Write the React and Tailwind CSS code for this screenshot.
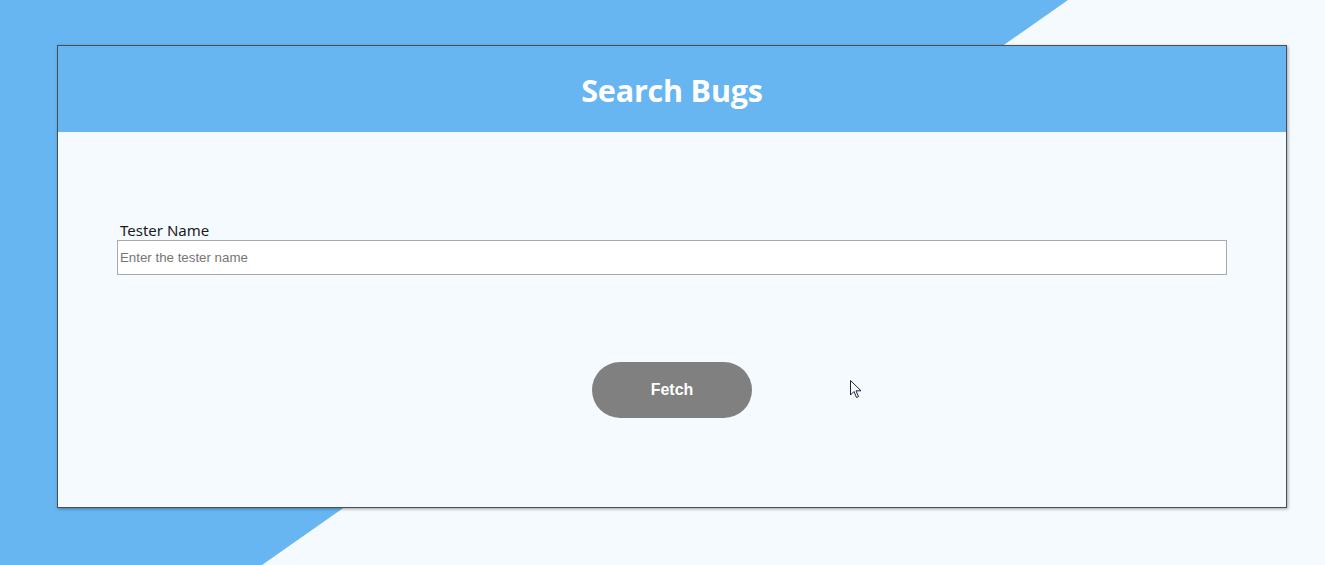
import React from "react";

const App = () => {
  return (
    <div className="relative h-[565px] w-full overflow-hidden bg-[#f5faff]">
      {/* diagonal blue backdrop */}
      <svg
        className="absolute inset-0"
        width="1325"
        height="565"
        viewBox="0 0 1325 565"
      >
        <polygon points="0,0 1068,0 262,565 0,565" fill="#67b6f1" />
      </svg>

      <div className="relative pt-[45px] pl-[57px]">
        <div className="w-[1230px] h-[463px] border border-[#4a4f55] bg-[#f5faff] shadow-[1px_1px_3px_rgba(0,0,0,0.35)]">
          <div className="h-[86px] pt-[4px] bg-[#67b6f1] flex items-center justify-center">
            <h1 className="text-white font-bold text-[30.5px] font-['Open_Sans',sans-serif] tracking-[-0.2px]">
              Search Bugs
            </h1>
          </div>

          <div className="px-[59px] pt-[89px]">
            <label className="block pl-[3px] text-[15px] leading-[18px] text-[#1a1a1a] font-['Noto_Sans',sans-serif]">
              Tester Name
            </label>
            <input
              type="text"
              placeholder="Enter the tester name"
              className="block w-full h-[35px] mt-[1px] border border-[#a9a9a9] bg-white px-[2px] text-[13.3px] font-['Liberation_Sans',sans-serif] placeholder:text-[#767676] outline-none"
            />

            <div className="flex justify-center mt-[87px]">
              <button className="w-[160px] h-[56px] rounded-full bg-[#808080] text-white font-bold text-[16px] font-['Liberation_Sans',sans-serif]">
                Fetch
              </button>
            </div>
          </div>
        </div>
      </div>

      {/* mouse pointer */}
      <svg
        className="absolute left-[850px] top-[380px]"
        width="13"
        height="20"
        viewBox="0 0 13 20"
      >
        <path
          d="M0.5 0.5 L0.5 15 L4 11.5 L6.5 17.5 L8.5 16.7 L6 10.8 L11 10.8 Z"
          fill="white"
          stroke="#1c2340"
          strokeWidth="1"
          strokeLinejoin="round"
        />
      </svg>
    </div>
  );
};

export default App;
